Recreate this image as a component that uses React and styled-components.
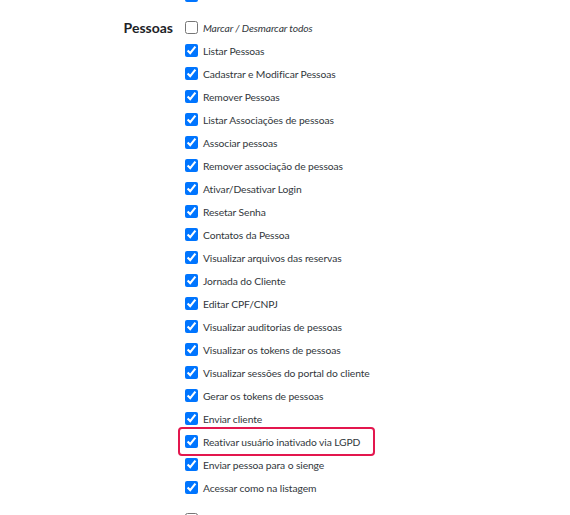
import React from "react";
import styled, { createGlobalStyle } from "styled-components";

const GlobalStyle = createGlobalStyle`
  html, body {
    margin: 0;
    padding: 0;
    background: #ffffff;
    overflow: hidden;
  }
  body {
    font-family: Lato, "Noto Sans", sans-serif;
    color: #32373c;
  }
`;

const Page = styled.div`
  margin-top: -16px;
  display: flex;
  flex-direction: column;
  gap: 9px;
`;

const Group = styled.div`
  display: flex;
  align-items: flex-start;
`;

const GroupLabel = styled.div`
  width: 173px;
  padding-right: 8px;
  text-align: right;
  font-size: 14px;
  font-weight: 700;
  line-height: 23px;
  color: #1d2327;
  flex-shrink: 0;
`;

const List = styled.div`
  display: flex;
  flex-direction: column;
  align-items: flex-start;
`;

const Row = styled.label`
  display: inline-flex;
  align-items: center;
  height: 23px;
  font-size: 10.3px;
  letter-spacing: -0.1px;
  font-style: ${(p) => (p.$italic ? "italic" : "normal")};
  padding-right: ${(p) => (p.$highlight ? "12px" : "0")};
  outline: ${(p) => (p.$highlight ? "2px solid #e3174e" : "none")};
  outline-offset: 1px;
  border-radius: 1px;
  white-space: nowrap;
`;

const Check = styled.input.attrs({ type: "checkbox" })`
  width: 13px;
  height: 13px;
  margin: 0 5px 0 4px;
  flex-shrink: 0;
`;

const pessoas = [
  "Listar Pessoas",
  "Cadastrar e Modificar Pessoas",
  "Remover Pessoas",
  "Listar Associações de pessoas",
  "Associar pessoas",
  "Remover associação de pessoas",
  "Ativar/Desativar Login",
  "Resetar Senha",
  "Contatos da Pessoa",
  "Visualizar arquivos das reservas",
  "Jornada do Cliente",
  "Editar CPF/CNPJ",
  "Visualizar auditorias de pessoas",
  "Visualizar os tokens de pessoas",
  "Visualizar sessões do portal do cliente",
  "Gerar os tokens de pessoas",
  "Enviar cliente",
  "Reativar usuário inativado via LGPD",
  "Enviar pessoa para o sienge",
  "Acessar como na listagem",
];

export default function App() {
  return (
    <>
      <GlobalStyle />
      <Page>
        <Group>
          <GroupLabel />
          <List>
            <Row>
              <Check defaultChecked aria-label="Permissão anterior" />
            </Row>
          </List>
        </Group>
        <Group>
          <GroupLabel>Pessoas</GroupLabel>
          <List>
            <Row $italic>
              <Check />
              Marcar / Desmarcar todos
            </Row>
            {pessoas.map((item) => (
              <Row key={item} $highlight={item.startsWith("Reativar")}>
                <Check defaultChecked />
                {item}
              </Row>
            ))}
          </List>
        </Group>
        <Group>
          <GroupLabel />
          <List>
            <Row>
              <Check aria-label="Próximo grupo" />
            </Row>
          </List>
        </Group>
      </Page>
    </>
  );
}
